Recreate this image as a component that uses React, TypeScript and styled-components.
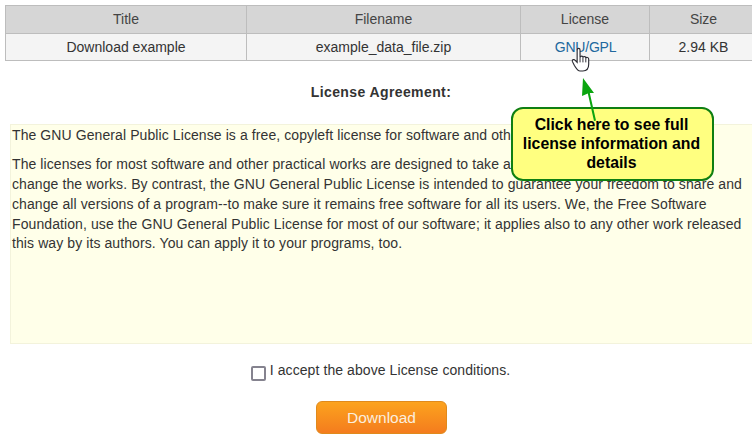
import styled, {createGlobalStyle} from 'styled-components';

const GlobalStyle = createGlobalStyle`
    html, body {
        margin: 0;
        padding: 0;
        background: #fff;
        overflow: hidden;
    }
`;

const Page = styled.div`
    position: relative;
    width: 752px;
    height: 442px;
    overflow: hidden;
    font-family: "Liberation Sans", Arial, sans-serif;
    font-size: 14px;
    color: #333;
    padding-top: 5px;
    box-sizing: border-box;
`;

const Table = styled.div`
    margin-left: 5px;
    width: 753px;
    border: solid #bdbdbd;
    border-width: 1px 0 1px 1px;
    display: grid;
    grid-template-columns: 241px 274px 129px 108px;
`;

const Cell = styled.div<{$head?: boolean}>`
    height: ${(p) => (p.$head ? 27 : 26)}px;
    line-height: ${(p) => (p.$head ? 27 : 26)}px;
    text-align: center;
    background: ${(p) => (p.$head ? '#d6d6d6' : '#f4f4f4')};
    border-right: 1px solid #bdbdbd;
    border-bottom: ${(p) => (p.$head ? '1px solid #bdbdbd' : '0')};
    color: ${(p) => (p.$head ? '#444' : '#333')};
    box-sizing: content-box;
`;

const LicenseLink = styled.a`
    color: #21689e;
    text-decoration: none;
    letter-spacing: -0.2px;
    padding-left: 1px;
`;

const Heading = styled.div`
    margin-top: 23px;
    height: 17px;
    line-height: 17px;
    text-align: center;
    font-weight: bold;
    letter-spacing: 0.4px;
    padding-left: 10px;
`;

const LicenseBox = styled.div`
    margin: 23px 0 0 10px;
    width: 742px;
    height: 220px;
    box-sizing: border-box;
    background: #ffffe9;
    border: 1px solid #f3f3dc;
    border-right: 0;
    padding: 1px 0 0 1px;
    line-height: 19.75px;
    letter-spacing: 0.09px;
    color: #333;
`;

const Para = styled.p`
    margin: 0 0 9.5px;
    white-space: nowrap;
`;

const AcceptRow = styled.div`
    margin-top: 18px;
    display: flex;
    justify-content: center;
    padding-left: 9px;
    height: 20px;
    line-height: 17px;
    letter-spacing: 0.08px;
`;

const CheckBox = styled.span`
    width: 11px;
    height: 11px;
    margin: 4px 4px 0 0;
    border: 2px solid #85838f;
    border-radius: 2px;
    background: #fff;
`;

const ButtonRow = styled.div`
    margin-top: 19px;
    padding-left: 11px;
    display: flex;
    justify-content: center;
`;

const DownloadButton = styled.button`
    width: 131px;
    height: 33px;
    border: 1px solid #e08a1c;
    border-radius: 6px;
    background: linear-gradient(#fca31e, #f47c1e);
    color: #fbeede;
    font-family: inherit;
    font-size: 15.5px;
    padding: 0;
`;

const Callout = styled.div`
    position: absolute;
    left: 511px;
    top: 107px;
    width: 203px;
    height: 74px;
    box-sizing: border-box;
    background: #ffff80;
    border: 2px solid #0f7f12;
    border-radius: 12px;
    color: #000;
    font-weight: bold;
    font-size: 15.8px;
    line-height: 19px;
    text-align: center;
    padding: 6px 6px 0 4px;
`;

const Arrow = styled.svg`
    position: absolute;
    left: 578px;
    top: 74px;
    width: 22px;
    height: 50px;
`;

const Cursor = styled.svg`
    position: absolute;
    left: 571px;
    top: 47px;
    width: 20px;
    height: 25px;
`;

const App = () => {
    return (
        <Page>
            <GlobalStyle />
            <Table>
                <Cell $head>Title</Cell>
                <Cell $head>Filename</Cell>
                <Cell $head>License</Cell>
                <Cell $head>Size</Cell>
                <Cell>Download example</Cell>
                <Cell>example_data_file.zip</Cell>
                <Cell><LicenseLink href='#'>GNU/GPL</LicenseLink></Cell>
                <Cell>2.94 KB</Cell>
            </Table>
            <Heading>License Agreement:</Heading>
            <LicenseBox>
                <Para>The GNU General Public License is a free, copyleft license for software and other kinds of works.</Para>
                <Para>
                    The licenses for most software and other practical works are designed to take away your freedom to share and<br />
                    change the works. By contrast, the GNU General Public License is intended to guarantee your freedom to share and<br />
                    change all versions of a program--to make sure it remains free software for all its users. We, the Free Software<br />
                    Foundation, use the GNU General Public License for most of our software; it applies also to any other work released<br />
                    this way by its authors. You can apply it to your programs, too.
                </Para>
            </LicenseBox>
            <AcceptRow>
                <CheckBox />
                <span>I accept the above License conditions.</span>
            </AcceptRow>
            <ButtonRow>
                <DownloadButton>Download</DownloadButton>
            </ButtonRow>
            <Callout>Click here to see full license information and details</Callout>
            <Arrow viewBox='0 0 22 50'>
                <path d='M5 4 L4 22 L9.8 19.6 L16 47 L18 46.6 L11.8 19 L16 19 Z' fill='#0aa50f' />
            </Arrow>
            <Cursor viewBox='0 0 20 26'>
                <path
                    d='M6 3 C6 1 9 1 9 3 L9 11 C9.5 9 12 9 12 11 C12.5 9.5 15 9.5 15 11.5 C15.5 10.5 18 10.5 18 12.5 L18 18 C18 22 16 25 12 25 L9 25 C6 25 5 22 3 19 L1 15 C0.5 13 3 12.5 4 14 L6 16 Z'
                    fill='#fff'
                    stroke='#2b2b33'
                    strokeWidth='1.2'
                />
                <path d='M9 11 V16 M12 11 V16 M15 11.5 V16' stroke='#2b2b33' strokeWidth='1' fill='none' />
            </Cursor>
        </Page>
    );
};

export default App;
